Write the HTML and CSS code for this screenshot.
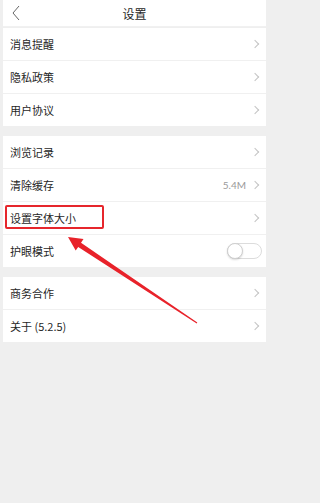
FILE: index.html
```html
<!DOCTYPE html>
<html lang="zh">
<head>
<meta charset="utf-8">
<link rel="stylesheet" href="styles.css">
</head>
<body>
<div class="page">
  <header class="topbar">
    <svg class="back" width="8" height="16" viewBox="0 0 8 16"><path d="M7 1 L1 8 L7 15" fill="none" stroke="#666" stroke-width="1"/></svg>
    <span class="title">设置</span>
  </header>

  <section class="group">
    <div class="row"><span class="label">消息提醒</span><span class="chev"></span></div>
    <div class="row"><span class="label">隐私政策</span><span class="chev"></span></div>
    <div class="row"><span class="label">用户协议</span><span class="chev"></span></div>
  </section>

  <section class="group">
    <div class="row"><span class="label">浏览记录</span><span class="chev"></span></div>
    <div class="row"><span class="label">清除缓存</span><span class="value">5.4M</span><span class="chev"></span></div>
    <div class="row"><span class="label">设置字体大小</span><span class="chev"></span></div>
    <div class="row"><span class="label">护眼模式</span><span class="toggle"><span class="knob"></span></span></div>
  </section>

  <section class="group">
    <div class="row"><span class="label">商务合作</span><span class="chev"></span></div>
    <div class="row"><span class="label">关于 (5.2.5)</span><span class="chev"></span></div>
  </section>

  <div class="highlight"></div>
  <svg class="arrow" width="270" height="503" viewBox="0 0 270 503">
    <polygon points="68,237 83.5,239 81,242.7 197.3,322.6 196.7,323.4 78.2,246.9 75.7,250.6" fill="#e8222a"/>
  </svg>
</div>
</body>
</html>
```

FILE: styles.css
```css
* { box-sizing: border-box; }
html, body { margin: 0; padding: 0; }
body {
  background: #efefef;
  font-family: "Noto Sans CJK SC", "Noto Sans", sans-serif;
  color: #1f1f1f;
}
.page {
  position: relative;
  width: 270px;
  height: 503px;
  padding: 0 4px 0 3px;
}
.topbar {
  position: relative;
  height: 27px;
  background: #fff;
  border-bottom: 1px solid #f1f1f1;
  display: flex;
  align-items: center;
  justify-content: center;
}
.back {
  position: absolute;
  left: 9px;
  top: 5px;
}
.title {
  font-size: 12px;
  color: #1f1f1f;
}
.group {
  background: #fff;
  display: flex;
  flex-direction: column;
}
.group + .group { margin-top: 10px; }
.topbar + .group { margin-top: 1px; }
.row {
  height: 33px;
  display: flex;
  align-items: center;
  padding: 0 5px 0 7px;
  border-top: 1px solid #f0f0f0;
}
.row:first-child { border-top: none; height: 32px; }
.label {
  flex: 1;
  font-size: 11px;
  color: #1f1f1f;
}
.value {
  font-size: 10px;
  color: #9a9a9a;
  margin-right: 6px;
  font-family: "Lato", "Noto Sans", sans-serif;
}
.chev {
  width: 6px;
  height: 6px;
  border-top: 1px solid #c4c4c4;
  border-right: 1px solid #c4c4c4;
  transform: rotate(45deg);
  margin-right: 3px;
}
.toggle {
  width: 35px;
  height: 16px;
  border-radius: 8px;
  border: 1px solid #dcdcdc;
  background: #fff;
  position: relative;
  margin-right: -1px;
}
.knob {
  position: absolute;
  left: -1px;
  top: -1px;
  width: 16px;
  height: 16px;
  border-radius: 50%;
  background: #fff;
  border: 1px solid #cfcfcf;
  box-shadow: 0 1px 2px rgba(0,0,0,0.15);
}
.highlight {
  position: absolute;
  left: 5px;
  top: 205px;
  width: 99px;
  height: 24px;
  border: 2px solid #e6262c;
  border-radius: 2px;
}
.arrow {
  position: absolute;
  left: 0;
  top: 0;
}
```
